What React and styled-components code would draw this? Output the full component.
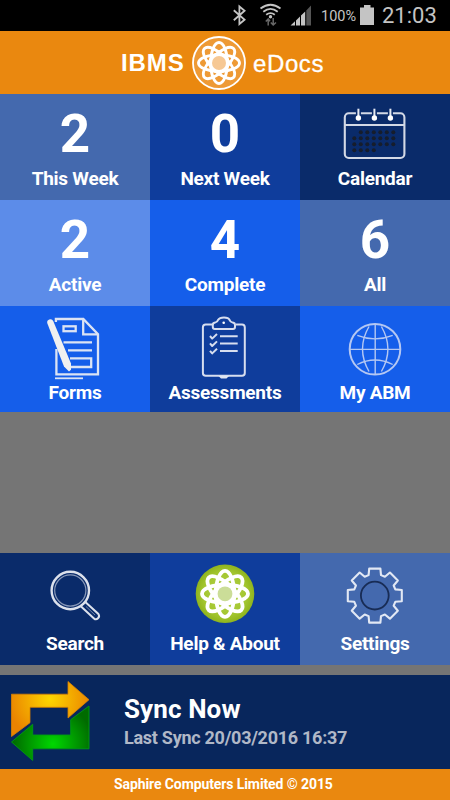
import styled, { createGlobalStyle } from 'styled-components';

const GlobalStyle = createGlobalStyle`
  body {
    margin: 0;
    background: #757575;
    font-family: Roboto, "Liberation Sans", sans-serif;
  }
`;

const toothPoints = [[-6.2, -20.5], [-5.6, -27], [5.6, -27], [6.2, -20.5]];

function getGearPoints() {
  const points = [];
  for (let i = 0; i < 8; i++) {
    const a = (i * Math.PI) / 4;
    toothPoints.forEach(([x, y]) => {
      const px = x * Math.cos(a) - y * Math.sin(a);
      const py = x * Math.sin(a) + y * Math.cos(a);
      points.push(px.toFixed(2) + ',' + py.toFixed(2));
    });
  }
  return points.join(' ');
}

function Flower({ rx, ry, width }) {
  return (
    <g fill="none" stroke="#fff" strokeWidth={width}>
      {[0, 45, 90, 135].map((angle) => (
        <ellipse key={angle} rx={rx} ry={ry} transform={`rotate(${angle})`} />
      ))}
    </g>
  );
}

function CalendarIcon() {
  const rows = [[1, 6], [0, 6], [0, 6], [0, 3]];
  return (
    <TileIcon viewBox="35 0 80 72" $height={72}>
      <g fill="none" stroke="#d3d9e6" strokeWidth="2.1">
        <rect x="44.8" y="19.3" width="59.6" height="44.7" rx="4" />
        <path d="M45 31H104" />
      </g>
      {[58.4, 74.4, 90.4].map((x) => (
        <g key={x}>
          <path d={`M${x} 14.5V23`} stroke="#0a2b6a" strokeWidth="5" />
          <path d={`M${x} 14.7V23`} stroke="#e6eaf2" strokeWidth="2" />
          <circle cx={x} cy="24" r="2.7" fill="#fff" />
        </g>
      ))}
      {rows.map(([from, to], row) =>
        Array.from({ length: to - from + 1 }, (_, i) => (
          <circle key={row + '-' + i} cx={54.3 + (from + i) * 6.5} cy={38.2 + row * 6} r="2" fill="#161d2c" />
        ))
      )}
    </TileIcon>
  );
}

function FormsIcon() {
  return (
    <TileIcon viewBox="35 0 80 74" $height={74}>
      <g fill="none" stroke="#dbe3f4" strokeWidth="2.3">
        <path d="M55.9 16V13H83.3L98 28.3V68.3H56.4V43" />
        <path d="M83.2 13V28.3H98" />
        <rect x="63.5" y="20.3" width="12.2" height="4.9" />
        <path d="M63.5 36.4H92M68 44.4H92M70 52.4H91.2V61H71" />
        <path d="M55 72.3H83" strokeWidth="1.8" />
      </g>
      <path d="M47.4 17.6Q46.4 14.6 49.2 13.6T53.2 15L71 57.5V63.8L69 65.5L64 60.5Z" fill="#f0f0f0" />
    </TileIcon>
  );
}

function AssessmentsIcon() {
  return (
    <TileIcon viewBox="35 0 80 74" $height={74}>
      <g fill="none" stroke="#d7deef" strokeWidth="2" strokeLinejoin="round">
        <path d="M62 18.6H55.7Q52.9 18.6 52.9 21.4V66.9Q52.9 69.7 55.7 69.7H92Q94.8 69.7 94.8 66.9V21.4Q94.8 18.6 92 18.6H86" />
        <path d="M62.8 21V19Q62.8 17 65 16.6Q67.5 16 68 14Q69.5 11.4 74 11.4T79.6 14Q80.2 16 82.7 16.6Q85 17 85 19V21Q85 23 83 23H64.8Q62.8 23 62.8 21Z" />
        <path d="M70 30.2H87.7M70 37.6H87.7M70 45.1H87.7" />
        <path d="M60 30L62.2 32.6L67 28M60 37.4L62.2 40L67 35.4M60 44.8L62.2 47.4L67 42.8" />
      </g>
      <circle cx="73.7" cy="16.8" r="1.3" fill="#fff" />
      <path d="M68.5 70H79L76.5 72.6H71Z" fill="#e1e6f1" />
    </TileIcon>
  );
}

function GlobeIcon() {
  return (
    <TileIcon viewBox="35 0 80 74" $height={74}>
      <g fill="none" stroke="#b4c7f3" strokeWidth="1.4">
        <circle cx="75" cy="43.2" r="25.3" strokeWidth="2" />
        <path d="M75.2 18V68M50 43.4H100" />
        <path d="M69 20.5Q56 43 69 65.5M81.4 20.5Q94.4 43 81.4 65.5" />
        <path d="M57.3 29.3Q75 36.5 92.7 29.3M57.3 58.5Q75 49.5 92.7 58.5" />
      </g>
    </TileIcon>
  );
}

function SearchIcon() {
  return (
    <TileIcon viewBox="35 0 80 78" $height={78}>
      <g fill="none" stroke="#dce1ec">
        <circle cx="70.3" cy="37.5" r="18.7" strokeWidth="2.4" />
        <circle cx="70.3" cy="37.5" r="15.6" strokeWidth="1.2" opacity="0.6" />
        <path d="M80.8 53.2L94 65.4Q96 67.2 98 65.3T98.4 61L85.3 48.9" strokeWidth="2" />
        <path d="M86 53.5L95 62" strokeWidth="0.8" opacity="0.6" />
      </g>
    </TileIcon>
  );
}

function HelpIcon() {
  return (
    <TileIcon viewBox="35 0 80 78" $height={78}>
      <defs>
        <radialGradient id="helpGreen">
          <stop offset="0" stopColor="#b5d34e" />
          <stop offset="0.75" stopColor="#a3c62f" />
          <stop offset="1" stopColor="#8fb41d" />
        </radialGradient>
      </defs>
      <circle cx="75" cy="40.8" r="29.3" fill="url(#helpGreen)" />
      <g transform="translate(75 40.8)">
        <circle r="12" fill="#fff" />
        <Flower rx={23} ry={9.2} width={3.8} />
        <circle r="7.4" fill="#cbdd98" />
      </g>
    </TileIcon>
  );
}

function SettingsIcon() {
  return (
    <TileIcon viewBox="35 0 80 78" $height={78}>
      <g transform="translate(74.8 42.6)" fill="none">
        <polygon points={getGearPoints()} stroke="#e2e8f4" strokeWidth="2.1" strokeLinejoin="round" />
        <circle r="13.9" stroke="#182c55" strokeWidth="1.8" />
      </g>
    </TileIcon>
  );
}

function SyncIcon() {
  return (
    <SyncArrows viewBox="0 0 100 94">
      <defs>
        <radialGradient id="syncOrange" gradientUnits="userSpaceOnUse" cx="50" cy="24" r="42">
          <stop offset="0" stopColor="#fdd600" />
          <stop offset="1" stopColor="#ea8300" />
        </radialGradient>
        <radialGradient id="syncGreen" gradientUnits="userSpaceOnUse" cx="53" cy="69" r="40">
          <stop offset="0" stopColor="#00d800" />
          <stop offset="1" stopColor="#006b00" />
        </radialGradient>
      </defs>
      <path d="M11.5 19.2H68V6.5L89 24.7L68 43V32.3H30V47.7L11.5 61.5Z" fill="url(#syncOrange)" stroke="#d98200" strokeWidth="0.8" />
      <path d="M89 31V73.8H32.7V85.5L11.5 67L32.7 49.3V60H70.7V44.7Z" fill="url(#syncGreen)" stroke="#009b12" strokeWidth="0.9" />
    </SyncArrows>
  );
}

function StatusBar() {
  return (
    <StyledStatusBar>
      <StatusIcon viewBox="232 0 16 31" $width={16} $right={11}>
        <path d="M233.8 10.3L244.6 19.8L239.4 24V6.5L244.6 10.8L233.8 20.3" fill="none" stroke="#c4c4c4" strokeWidth="1.8" />
      </StatusIcon>
      <StatusIcon viewBox="259 0 24 31" $width={24} $right={7}>
        <g fill="none" stroke="#c4c4c4" strokeWidth="1.8">
          <path d="M260.5 8.5Q270.5 1 280.5 8.5" />
          <path d="M263.3 11.7Q270.5 6.2 277.7 11.7" />
          <path d="M266.2 14.8Q270.5 11.4 274.8 14.8" />
        </g>
        <circle cx="270.5" cy="16.8" r="1.7" fill="#c4c4c4" />
        <path d="M268.2 25.5V19.5M265.8 21.5L268.2 19L270 21.3M273.2 18V24.5M270.8 22.5L273.2 25L276 22.5" fill="none" stroke="#686868" strokeWidth="1.5" />
      </StatusIcon>
      <StatusIcon viewBox="290 0 22 31" $width={22} $right={9}>
        <path d="M290.5 25.5L295 21.2V25.5Z M296 20.4L300 16.5V25.5H296Z M301 15.6L305.2 11.5V25.5H301Z" fill="#c4c4c4" />
        <path d="M306.3 10.4L311 5.5V25.5H306.3Z" fill="#555" />
      </StatusIcon>
      <Percent>100%</Percent>
      <StatusIcon viewBox="360 0 14 31" $width={14} $right={8}>
        <path d="M360 7.5H364V5H370.5V7.5H374V25H360Z" fill="#c4c4c4" />
      </StatusIcon>
      <Clock>21:03</Clock>
    </StyledStatusBar>
  );
}

const stats = [
  { value: 2, label: 'This Week', color: '#4469ae' },
  { value: 0, label: 'Next Week', color: '#0f3d9c' },
  { icon: <CalendarIcon />, label: 'Calendar', color: '#0a2b6a' },
  { value: 2, label: 'Active', color: '#5c8ce9' },
  { value: 4, label: 'Complete', color: '#155eea' },
  { value: 6, label: 'All', color: '#4469ae' },
];

const documents = [
  { icon: <FormsIcon />, label: 'Forms', color: '#155eea' },
  { icon: <AssessmentsIcon />, label: 'Assessments', color: '#0f3d9c' },
  { icon: <GlobeIcon />, label: 'My ABM', color: '#155eea' },
];

const tools = [
  { icon: <SearchIcon />, label: 'Search', color: '#0a2b6a' },
  { icon: <HelpIcon />, label: 'Help & About', color: '#0f3d9c' },
  { icon: <SettingsIcon />, label: 'Settings', color: '#4469ae' },
];

function Tiles({ items, height }) {
  return (
    <TileGrid $rowHeight={height}>
      {items.map((item) => (
        <Tile key={item.label} $color={item.color}>
          {item.icon || <Count>{item.value}</Count>}
          <TileLabel>{item.label}</TileLabel>
        </Tile>
      ))}
    </TileGrid>
  );
}

function App() {
  return (
    <Screen>
      <GlobalStyle />
      <StatusBar />
      <Header>
        <BrandBold>IBMS</BrandBold>
        <Logo viewBox="-28 -28 56 56">
          <circle r="26" fill="#ee9a35" stroke="#fff" strokeWidth="1.8" />
          <circle r="10.5" fill="#fff" />
          <Flower rx={20.5} ry={8.4} width={2.9} />
          <circle r="7" fill="#f6c894" />
        </Logo>
        <Brand>eDocs</Brand>
      </Header>
      <Tiles items={stats} height={106} />
      <Tiles items={documents} height={106} />
      <Spacer />
      <Tiles items={tools} height={112} />
      <SyncBar>
        <SyncIcon />
        <div>
          <SyncTitle>Sync Now</SyncTitle>
          <SyncDate>Last Sync 20/03/2016 16:37</SyncDate>
        </div>
      </SyncBar>
      <Footer>Saphire Computers Limited © 2015</Footer>
    </Screen>
  );
}

export default App;

const Screen = styled.div`
  display: flex;
  flex-direction: column;
  width: 450px;
  height: 800px;
  overflow: hidden;
  background: #757575;
  color: white;
`;

const StyledStatusBar = styled.div`
  display: flex;
  justify-content: flex-end;
  flex: none;
  height: 31px;
  padding-right: 13px;
  background: black;
  color: #c4c4c4;
`;

const StatusIcon = styled.svg`
  flex: none;
  width: ${(props) => props.$width}px;
  height: 31px;
  margin-right: ${(props) => props.$right}px;
`;

const Percent = styled.div`
  width: 36px;
  margin-right: 3px;
  font-size: 14.5px;
  line-height: 34px;
`;

const Clock = styled.div`
  width: 55px;
  font-size: 22px;
  line-height: 32px;
`;

const Header = styled.div`
  display: flex;
  align-items: center;
  flex: none;
  height: 63px;
  padding-left: 121px;
  background: #ea880f;
  font-family: "Liberation Sans", Arial, sans-serif;
  font-size: 24px;
`;

const BrandBold = styled.div`
  width: 70px;
  padding-top: 1px;
  font-weight: bold;
  letter-spacing: 0.9px;
`;

const Brand = styled.div`
  margin-left: 6px;
  padding-top: 2px;
  letter-spacing: 0.6px;
  -webkit-text-stroke: 0.3px white;
`;

const Logo = styled.svg`
  width: 56px;
  height: 56px;
`;

const TileGrid = styled.div`
  display: grid;
  flex: none;
  grid-template-columns: repeat(3, 150px);
  grid-auto-rows: ${(props) => props.$rowHeight}px;
`;

const Tile = styled.div`
  display: flex;
  flex-direction: column;
  align-items: center;
  background: ${(props) => props.$color};
`;

const TileIcon = styled.svg`
  flex: none;
  width: 80px;
  height: ${(props) => props.$height}px;
`;

const Count = styled.div`
  height: 72px;
  font-size: 53px;
  font-weight: bold;
  line-height: 81px;
`;

const TileLabel = styled.div`
  font-size: 19px;
  font-weight: bold;
  letter-spacing: -0.25px;
  line-height: 26px;
  white-space: nowrap;
`;

const Spacer = styled.div`
  flex: none;
  height: 141px;
`;

const SyncBar = styled.div`
  display: flex;
  flex: none;
  height: 94px;
  margin-top: 10px;
  background: #08265c;
`;

const SyncArrows = styled.svg`
  width: 100px;
  height: 94px;
  margin-right: 24px;
`;

const SyncTitle = styled.div`
  padding-top: 18px;
  font-size: 26px;
  font-weight: bold;
  letter-spacing: 0.1px;
  line-height: 32px;
`;

const SyncDate = styled.div`
  font-size: 18px;
  font-weight: bold;
  letter-spacing: -0.27px;
  line-height: 26px;
  color: #b0b8c7;
`;

const Footer = styled.div`
  flex: none;
  height: 31px;
  padding-left: 114px;
  background: #ea880f;
  font-size: 14px;
  font-weight: bold;
  letter-spacing: -0.1px;
  line-height: 31px;
`;
